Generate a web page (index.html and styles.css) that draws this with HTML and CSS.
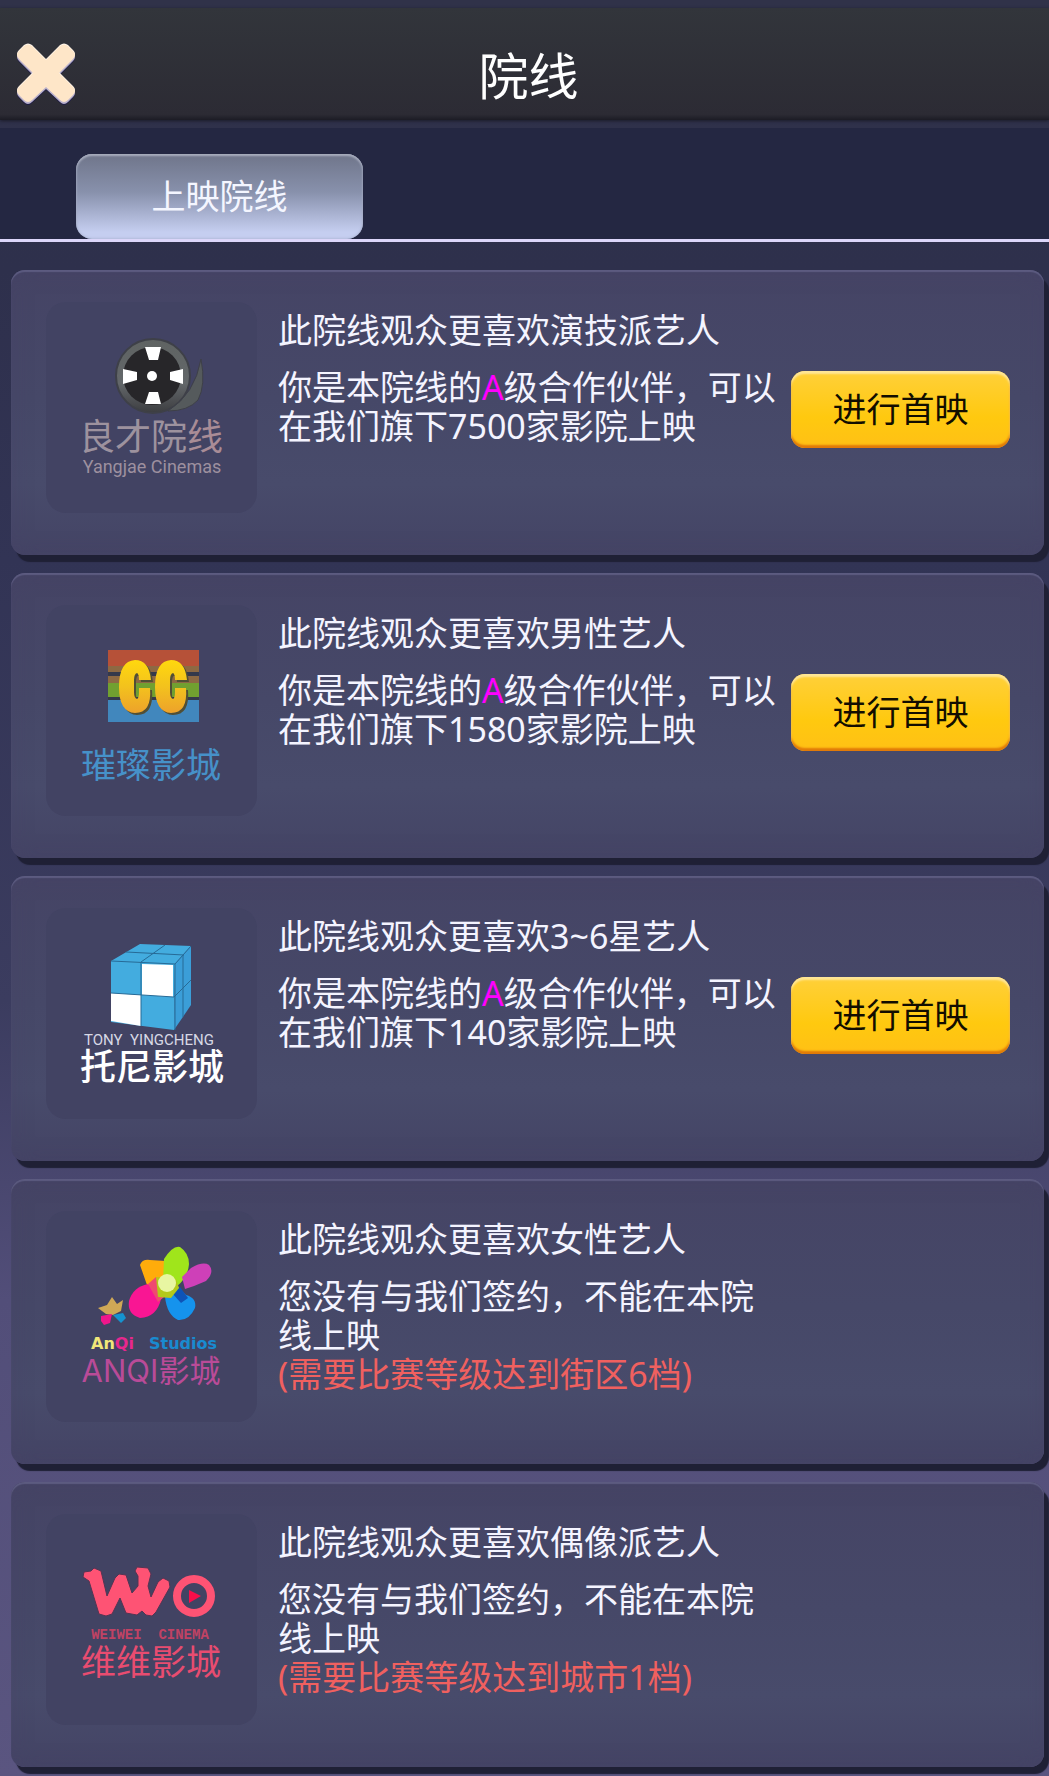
FILE: index.html
```html
<!DOCTYPE html>
<html lang="zh-CN">
<head>
<meta charset="utf-8">
<meta name="viewport" content="width=device-width, initial-scale=1">
<title>院线</title>
<link rel="stylesheet" href="styles.css">
</head>
<body>
<header class="header">
  <button class="close" type="button" aria-label="关闭">
    <svg viewBox="0 0 64 64" width="64" height="64" aria-hidden="true">
      <defs>
        <path id="cross" d="M10 4q4-3 8 0L32 18 46 4q4-3 8 0l5 5q4 4 0 8L45 31 59 45q4 4 0 8l-5 5q-4 4-8 0L32 45 18 58q-4 4-8 0l-5-5q-4-4 0-8L19 31 5 17q-4-4 0-8Z"/>
      </defs>
      <use href="#cross" y="4" fill="#1d1b48"/>
      <use href="#cross" y="3" fill="#b9b1cb"/>
      <use href="#cross" fill="#fff6ec"/>
      <use href="#cross" y="1" fill="#fee6c8"/>
    </svg>
  </button>
  <h1 class="title">院线</h1>
</header>
<nav class="tabs">
  <button class="tab" type="button">上映院线</button>
</nav>
<main class="list">
  <article class="card">
    <svg class="logo" viewBox="0 0 211 211" role="img" aria-label="良才院线">
      <defs>
        <linearGradient id="rim" x1="0" y1="0" x2="0" y2="1">
          <stop offset="0" stop-color="#5f6362"/>
          <stop offset="0.6" stop-color="#63676a"/>
          <stop offset="1" stop-color="#3c3d40"/>
        </linearGradient>
      </defs>
      <circle cx="107" cy="74" r="37" fill="url(#rim)" stroke="#3e4048" stroke-width="2"/>
      <circle cx="106" cy="74" r="29" fill="#272629"/>
      <path d="M99 45h16l-3 13h-9ZM99 102h16l-3-12h-9ZM77 67l14 3v8l-14 4ZM137 67l-13 3v8l13 4Z" fill="#fff"/>
      <circle cx="106" cy="74" r="5" fill="#fff"/>
      <path d="M155 57q5 26-3 41-10 11-30 11 27-17 33-52Z" fill="#555a5c" stroke="#3e4048" stroke-width="1"/>
      <text x="105" y="148" class="name" font-size="36" fill="#9d929e">良才院<tspan fill="#a98c96">线</tspan></text>
      <text x="106" y="171" class="latin" font-size="18" fill="#9d909f">Yangjae Cinemas</text>
    </svg>
    <div class="info">
      <h2 class="taste">此院线观众更喜欢演技派艺人</h2>
      <p class="terms">你是本院线的<span class="grade">A</span>级合作伙伴，可以在我们旗下7500家影院上映</p>
    </div>
    <button class="premiere" type="button">进行首映</button>
  </article>
  <article class="card">
    <svg class="logo" viewBox="0 0 211 211" role="img" aria-label="璀璨影城">
      <defs>
        <linearGradient id="gold" x1="0" y1="0" x2="0" y2="1">
          <stop offset="0" stop-color="#ffd80e"/>
          <stop offset="0.5" stop-color="#f3c21d"/>
          <stop offset="1" stop-color="#eda22b"/>
        </linearGradient>
        <path id="big-c" d="M32 20H20Q20 14 18 13 15 14 15 20V32Q15 38 18 39 20 38 20 32V28H31Q33 53 16 53 0 52 0 27 0 1 16 0 30 0 32 20Z"/>
      </defs>
      <path d="M62 45h91v16H62Z" fill="#b65138"/>
      <path d="M62 61h91v6H62ZM62 71h91v7H62Z" fill="#8d6943"/>
      <path d="M62 67h91v4H62ZM62 92h91v3H62Z" fill="#34394b"/>
      <path d="M62 78h91v14H62Z" fill="#71a030"/>
      <path d="M62 95h91v22H62Z" fill="#4187bd"/>
      <g fill="#514f35">
        <use href="#big-c" x="75" y="57"/>
        <use href="#big-c" x="111" y="57"/>
      </g>
      <g fill="url(#gold)">
        <use href="#big-c" x="73" y="55"/>
        <use href="#big-c" x="109" y="55"/>
      </g>
      <text x="105" y="173" class="name" font-size="35" fill="#4691c9">璀璨影城</text>
    </svg>
    <div class="info">
      <h2 class="taste">此院线观众更喜欢男性艺人</h2>
      <p class="terms">你是本院线的<span class="grade">A</span>级合作伙伴，可以在我们旗下1580家影院上映</p>
    </div>
    <button class="premiere" type="button">进行首映</button>
  </article>
  <article class="card">
    <svg class="logo" viewBox="0 0 211 211" role="img" aria-label="托尼影城">
      <path d="M65 53 94 36 145 38 129 56 128 122 65 114Z" fill="#43acdf"/>
      <path d="M129 56 145 38V97L128 122Z" fill="#3b9ed8"/>
      <path d="M96 56 127 57V89L96 87ZM65 85 95 87V118L65 113Z" fill="#fff"/>
      <path d="M65 53 129 56V122M65 85 128 89 145 72M95 54V118M129 56 145 38M80 44 138 47M95 54 119 37M137 47V109" fill="none" stroke="#276a96" stroke-width="1"/>
      <text x="103" y="137" class="latin" font-size="15" fill="#d7d8e5" xml:space="preserve">TONY  YINGCHENG</text>
      <text x="106" y="172" class="name medium" font-size="36" fill="#fff">托尼影城</text>
    </svg>
    <div class="info">
      <h2 class="taste">此院线观众更喜欢3~6星艺人</h2>
      <p class="terms">你是本院线的<span class="grade">A</span>级合作伙伴，可以在我们旗下140家影院上映</p>
    </div>
    <button class="premiere" type="button">进行首映</button>
  </article>
  <article class="card">
    <svg class="logo" viewBox="0 0 211 211" role="img" aria-label="ANQI影城">
      <path d="M94 54Q96 48 104 49L120 50 118 74 101 74Z" fill="#ffac0b"/>
      <path d="M118 48Q127 34 134 36 143 42 143 53 142 67 130 76L117 70Z" fill="#a0e51b"/>
      <path d="M136 66 145 57Q157 50 163 54 169 61 160 70 149 75 139 78Z" fill="#ce40b8"/>
      <path d="M119 86 132 76 140 84Q151 87 149 97 143 110 132 109 121 104 119 86Z" fill="#1593ed"/>
      <path d="M134 76 142 87 135 92 126 82Z" fill="#0e53b7"/>
      <path d="M102 73 115 88Q111 106 94 107 81 103 83 90 87 76 102 73Z" fill="#f91693"/>
      <path d="M102 73 110 66 118 86 112 91Z" fill="#ef4a70"/>
      <path d="M110 66 130 68 133 77 125 87 112 86Z" fill="#b3c91a"/>
      <circle cx="121" cy="72" r="9" fill="#e8f6a2"/>
      <path d="M52 97 61 94 66 86 71 93 77 89 75 100 67 104 60 103Z" fill="#cfa856"/>
      <path d="M55 105 66 103 64 112 58 114 55 110Z" fill="#ef168b"/>
      <path d="M67 104 77 102 80 107 75 112Z" fill="#1593d0"/>
      <text x="45" y="138" class="studio" font-size="16"><tspan fill="#f1e779">An</tspan><tspan fill="#e7278e">Qi</tspan></text>
      <text x="103" y="138" class="studio" font-size="16" fill="#198bd0">Studios</text>
      <text x="105" y="171" class="name brand" font-size="31" fill="#b94b98">ANQI影城</text>
    </svg>
    <div class="info">
      <h2 class="taste">此院线观众更喜欢女性艺人</h2>
      <p class="terms">您没有与我们签约，不能在本院线上映</p>
      <p class="need">(需要比赛等级达到街区6档)</p>
    </div>
  </article>
  <article class="card">
    <svg class="logo" viewBox="0 0 211 211" role="img" aria-label="维维影城">
      <path d="M37 63 38 58 45 57 48 54 55 57 61 82 69 64 73 60 80 61 86 79 92 72 92 62 89 57 91 53 102 54 105 60 102 72 105 83 112 68 117 64 123 67 124 73 110 98 106 102 100 101 96 97 91 101 80 99 74 84 66 100 60 102 53 100 43 67Z" fill="#fe5374" stroke="#553553" stroke-width="1"/>
      <circle cx="148" cy="82" r="17" fill="none" stroke="#fe5374" stroke-width="8"/>
      <path d="M143 76 155 82 143 89Z" fill="#f80e49"/>
      <text x="104" y="125" class="mono" font-size="14" fill="#c04264" xml:space="preserve">WEIWEI  CINEMA</text>
      <text x="105" y="161" class="name" font-size="35" fill="#e84c70">维维影城</text>
    </svg>
    <div class="info">
      <h2 class="taste">此院线观众更喜欢偶像派艺人</h2>
      <p class="terms">您没有与我们签约，不能在本院线上映</p>
      <p class="need">(需要比赛等级达到城市1档)</p>
    </div>
  </article>
</main>
</body>
</html>
```
FILE: styles.css
```css
* { box-sizing: border-box; }

body {
  margin: 0;
  padding-top: 8px;
  min-height: 100vh;
  background: linear-gradient(#303249 0, #2e304c 270px, #323455 560px, #3b3c5f 1000px, #524e79 1300px, #5a5580 100%);
  color: #f4f4ff;
  font-family: "Noto Sans", "Noto Sans CJK SC", sans-serif;
  font-size: 34px;
  line-height: 39px;
}

button {
  border: 0;
  padding: 0;
  font: inherit;
  cursor: pointer;
}

.header {
  display: grid;
  grid-template-columns: 64px 1fr 56px;
  align-items: center;
  height: 112px;
  padding: 18px 14px 0;
  background: linear-gradient(#32353b, #2c2b34 95%, #1c1c25);
  box-shadow: 0 1px 3px #1b1c29;
}

.close {
  height: 64px;
  background: none;
}

.close svg { display: block; }

.title {
  margin: 0;
  padding-top: 6px;
  text-align: center;
  font-size: 50px;
  line-height: 60px;
  font-weight: 400;
  color: #fff;
}

.tabs {
  display: flex;
  margin-top: 8px;
  padding: 26px 76px 0;
  background: #242742;
  border-bottom: 3px solid #dcd6fa;
}

.tab {
  width: 287px;
  height: 85px;
  border-radius: 16px;
  background: linear-gradient(#6f758a, #8891ac 45%, #c5cef0 92%);
  box-shadow: inset 0 2px 2px #a6abbb, inset 0 0 3px #a1aac7;
  color: #f4f6ff;
}

.list {
  display: flex;
  flex-direction: column;
  gap: 18px;
  padding: 28px 5px 9px 11px;
}

.card {
  display: flex;
  align-items: flex-start;
  height: 285px;
  padding: 32px 34px 0 35px;
  border-radius: 14px;
  background: linear-gradient(#454465, #464868 45%, #484b6b 75%, #444465);
  box-shadow: inset 0 2px 1px #5c5b80, inset 0 0 20px #45416680, 5px 7px 1px #1f2035;
}

.logo {
  flex: none;
  width: 211px;
  height: 211px;
  border-radius: 20px;
  background: #424363;
}

.name {
  text-anchor: middle;
  font-family: "Noto Sans CJK SC", sans-serif;
}

.medium { font-weight: 500; }

.brand { font-family: Inter, "Noto Sans CJK SC", sans-serif; }

.latin {
  text-anchor: middle;
  font-family: Roboto, sans-serif;
}

.studio {
  font-family: "DejaVu Sans", sans-serif;
  font-weight: 700;
}

.mono {
  text-anchor: middle;
  font-family: "Liberation Mono", monospace;
  font-weight: 700;
}

.info {
  flex: 0 1 504px;
  margin: 9px 8px 0 21px;
}

.taste {
  margin: 0 0 18px;
  font-size: 34px;
  font-weight: inherit;
}

.terms, .need { margin: 0; }

.grade { color: #f0f; }

.need { color: #f0605f; }

.premiere {
  flex: none;
  width: 219px;
  height: 77px;
  margin: 69px 0 0 auto;
  border-radius: 14px;
  background: linear-gradient(#ffd03a, #ffc90f 60%, #ffc015);
  box-shadow: inset 0 3px 2px #ffe696, inset 0 -3px 2px #e17a08;
  color: #120d00;
}
```
